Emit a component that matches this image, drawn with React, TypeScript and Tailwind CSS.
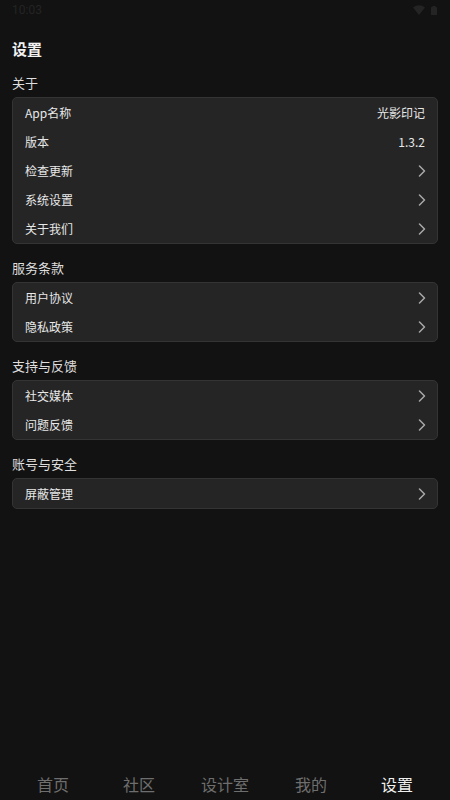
import React from "react";

const font = { fontFamily: '"Noto Sans CJK SC", "Noto Sans", sans-serif' };

function Chevron() {
  return (
    <svg width="8" height="12" viewBox="0 0 8 12" className="shrink-0">
      <polyline points="1.5,1 6.5,6 1.5,11" fill="none" stroke="#a8a8a8" strokeWidth="1.5" strokeLinecap="round" strokeLinejoin="round" />
    </svg>
  );
}

type Row = { label: string; value?: string };

function Section({ title, rows, first }: { title: string; rows: Row[]; first?: boolean }) {
  return (
    <div className={first ? "mt-[5px]" : "mt-[10px]"}>
      <div className="h-[28px] flex items-center text-[13px] text-[#dedede]">{title}</div>
      <div className="rounded-[5px] border border-[#343434] bg-[#252525]">
        {rows.map((r) => (
          <div key={r.label} className="h-[29px] flex items-center justify-between pl-3 pr-[11px] text-[12px] text-[#e8e8e8]">
            <span>{r.label}</span>
            {r.value ? <span className="pr-px">{r.value}</span> : <Chevron />}
          </div>
        ))}
      </div>
    </div>
  );
}

export default function App() {
  const nav = ["首页", "社区", "设计室", "我的", "设置"];
  return (
    <div className="w-[450px] h-[800px] bg-[#121212] flex flex-col overflow-hidden" style={font}>
      <div className="h-[20px] flex items-center justify-between px-3 shrink-0">
        <span className="text-[12px] text-[#242424]" style={{ fontFamily: '"Roboto", sans-serif' }}>10:03</span>
        <div className="flex items-center gap-[6px] pr-[1px]">
          <svg width="12" height="10" viewBox="0 0 12 10">
            <path d="M0 2.6 Q6 -2 12 2.6 L6 10 Z" fill="#242424" />
          </svg>
          <svg width="6" height="9" viewBox="0 0 6 9">
            <rect x="0" y="1" width="6" height="8" rx="0.6" fill="#242424" />
            <rect x="1.5" y="0" width="3" height="1.2" fill="#242424" />
          </svg>
        </div>
      </div>
      <div className="px-3">
        <div className="mt-[14px] h-[30px] flex items-center text-[15px] font-bold text-[#f2f2f2]">设置</div>
        <Section
          first
          title="关于"
          rows={[
            { label: "App名称", value: "光影印记" },
            { label: "版本", value: "1.3.2" },
            { label: "检查更新" },
            { label: "系统设置" },
            { label: "关于我们" },
          ]}
        />
        <Section title="服务条款" rows={[{ label: "用户协议" }, { label: "隐私政策" }]} />
        <Section title="支持与反馈" rows={[{ label: "社交媒体" }, { label: "问题反馈" }]} />
        <Section title="账号与安全" rows={[{ label: "屏蔽管理" }]} />
      </div>
      <div className="mt-auto h-[32px] flex px-[10px] shrink-0">
        {nav.map((n, i) => (
          <div
            key={n}
            className={
              "flex-1 flex items-center justify-center text-[16px] " +
              (i === 4 ? "text-[#f0f0f0]" : "text-[#6e6e6e]")
            }
          >
            {n}
          </div>
        ))}
      </div>
    </div>
  );
}
